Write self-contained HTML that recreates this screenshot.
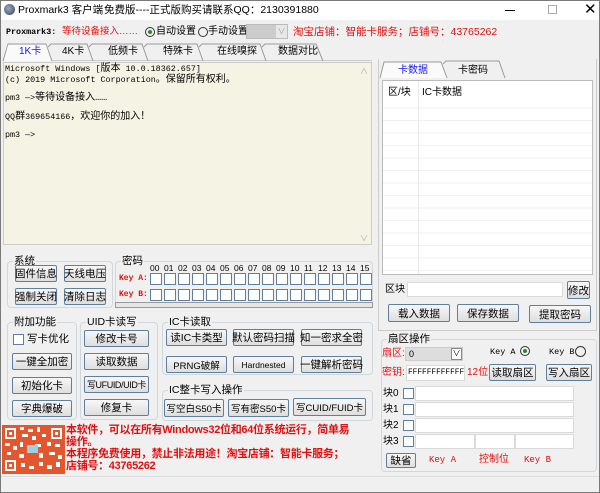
<!DOCTYPE html>
<html><head><meta charset="utf-8"><style>
*{margin:0;padding:0;box-sizing:border-box}
body{width:600px;height:493px;overflow:hidden;background:#f0f0f0;font-family:"Liberation Sans","Noto Sans CJK SC",sans-serif;font-size:10px;color:#000;position:relative}
.a{position:absolute;white-space:nowrap}
.b{position:absolute;border:1px solid #5f7f9f;border-radius:2px;background:linear-gradient(#f7f7f7,#dedede);display:flex;align-items:center;justify-content:center;font-size:10.5px;white-space:nowrap}
.g{position:absolute;border:1px solid #d0d8de;border-radius:4px}
.gt{position:absolute;top:-7px;left:5px;background:#f0f0f0;padding:0 1px;font-size:10.5px;line-height:12px}
.red{color:#e01010}
.m{font-family:"Liberation Mono","Noto Sans CJK SC",monospace}
.in{position:absolute;background:#fff;border:1px solid #dadada}
.cb{position:absolute;width:11px;height:11px;border:1px solid #5f7f9f;background:#fff}
.c{font-size:10px}
</style></head><body>
<div class="a" style="left:0;top:0;width:600px;height:493px;border:1px solid #7a7a7a"></div>
<div class="a" style="left:1px;top:1px;width:598px;height:19px;background:#fff"></div>
<div class="a" style="left:4px;top:4px;width:11px;height:11px;border-radius:50%;background:radial-gradient(circle at 40% 40%,#9ab,#345)"></div>
<div class="a" style="left:18px;top:3px;font-size:10.5px;line-height:14px">Proxmark3 客户端</div>
<div class="a" style="left:104px;top:3px;font-size:10.5px;line-height:14px">免费版----正式版购买请联系QQ：2130391880</div>
<div class="a" style="left:505px;top:10px;width:10px;height:1px;background:#000"></div>
<div class="a" style="left:548px;top:5px;width:9px;height:9px;border:1px solid #aaa"></div>
<div class="a" style="left:584px;top:1px;font-size:15px;line-height:18px">✕</div>
<div class="a m" style="left:6px;top:25px;font-size:8.4px;line-height:14px;font-weight:bold">Proxmark3:</div>
<div class="a red" style="left:62px;top:25px;font-size:9.5px;line-height:14px">等待设备接入……</div>
<div class="a" style="left:145px;top:27px;width:10px;height:10px;border:1px solid #333;border-radius:50%"></div>
<div class="a" style="left:148px;top:30px;width:4px;height:4px;border-radius:50%;background:#2a8a2a"></div>
<div class="a" style="left:156px;top:25px;line-height:14px">自动设置</div>
<div class="a" style="left:198px;top:27px;width:10px;height:10px;border:1px solid #333;border-radius:50%"></div>
<div class="a" style="left:208px;top:25px;line-height:14px">手动设置</div>
<div class="a" style="left:246px;top:24px;width:42px;height:15px;background:#ccc;border:1px solid #bbb"></div>
<div class="a" style="left:276px;top:25px;width:11px;height:13px;background:#e8e8e8;font-size:8px;color:#999;text-align:center;line-height:13px">∨</div>
<div class="a red" style="left:293px;top:24px;font-size:10.5px;line-height:16px">淘宝店铺：智能卡服务；店铺号：43765262</div>
<div class="a" style="left:3px;top:60px;width:369px;height:1px;background:#ccc"></div>
<svg class="a" style="left:0;top:42px" width="380" height="20"><g fill="none" stroke="#9a9a9a">
<path d="M3 19 L8 2 H46 L52 19"/><path d="M48 5 L51 2 H87 L93 19"/><path d="M89 5 L92 2 H142 L148 19"/><path d="M144 5 L147 2 H197 L203 19"/><path d="M199 5 L202 2 H260 L266 19"/><path d="M262 5 L265 2 H316 L323 19"/></g>
<path d="M4 19 L8 3 H46 L51 19Z" fill="#fafafa"/></svg>
<div class="a c" style="left:19px;top:45px;line-height:13px;color:#1a1aee">1K卡</div>
<div class="a c" style="left:62px;top:45px;line-height:13px">4K卡</div>
<div class="a c" style="left:108px;top:45px;line-height:13px">低频卡</div>
<div class="a c" style="left:163px;top:45px;line-height:13px">特殊卡</div>
<div class="a c" style="left:217px;top:45px;line-height:13px">在线嗅探</div>
<div class="a c" style="left:278px;top:45px;line-height:13px">数据对比</div>
<div class="a" style="left:3px;top:62px;width:369px;height:183px;background:#f5f3e4;border:1px solid #ccc"></div>
<div class="a" style="left:360px;top:66px;font-size:8px;color:#aaa">∧</div>
<div class="a" style="left:360px;top:233px;font-size:8px;color:#aaa">∨</div>
<div class="a m" style="left:5px;top:64px;font-size:8.4px;line-height:10px">Microsoft Windows [<span style="font-size:10px">版本</span> 10.0.18362.657]<br>(c) 2019 Microsoft Corporation<span style="font-size:10px">。保留所有权利。</span></div>
<div class="a m" style="left:5px;top:92px;font-size:8.4px;line-height:12px">pm3 —><span style="font-size:10px">等待设备接入……</span></div>
<div class="a m" style="left:5px;top:111px;font-size:8.4px;line-height:12px">QQ<span style="font-size:10px">群</span>369654166<span style="font-size:10px">，欢迎你的加入！</span></div>
<div class="a m" style="left:5px;top:129px;font-size:8.4px;line-height:12px">pm3 —></div>
<div class="a" style="left:378px;top:59px;width:219px;height:272px;border:1px solid #ccc;border-top:none"></div>
<svg class="a" style="left:378px;top:59px" width="222" height="20"><g fill="none" stroke="#9a9a9a"><path d="M2 19 L6 3 H63 L69 19" fill="#fafafa"/><path d="M65 5 L68 2 H121 L127 19"/></g></svg>
<div class="a c" style="left:398px;top:64px;line-height:13px;color:#1a1aee">卡数据</div>
<div class="a c" style="left:458px;top:64px;line-height:13px">卡密码</div>
<div class="a" style="left:382px;top:80px;width:211px;height:195px;background:#fff;border:1px solid #bbb;background-image:repeating-linear-gradient(#fff 0,#fff 11.5px,#eef0f2 11.5px,#eef0f2 12.5px);background-position:0 15px"></div>
<div class="a" style="left:383px;top:81px;width:209px;height:21px;background:#fff"></div>
<div class="a" style="left:418px;top:81px;width:1px;height:193px;background:#e6e8ea"></div>
<div class="a" style="left:388px;top:86px;line-height:14px">区/块</div>
<div class="a" style="left:422px;top:86px;line-height:14px">IC卡数据</div>
<div class="a" style="left:385px;top:283px;line-height:14px">区块</div>
<div class="in" style="left:407px;top:282px;width:156px;height:15px"></div>
<div class="b" style="left:567px;top:281px;width:23px;height:18px">修改</div>
<div class="b" style="left:388px;top:304px;width:62px;height:18px">载入数据</div>
<div class="b" style="left:457px;top:304px;width:62px;height:18px">保存数据</div>
<div class="b" style="left:529px;top:305px;width:62px;height:18px">提取密码</div>
<div class="g" style="left:381px;top:339px;width:216px;height:133px"><div class="gt">扇区操作</div></div>
<div class="a red" style="left:382px;top:347px;line-height:14px">扇区:</div>
<div class="a" style="left:405px;top:347px;width:58px;height:14px;background:#ddd;border:1px solid #ccc;font-size:9px;line-height:12px;padding-left:3px">0</div>
<div class="a" style="left:451px;top:348px;width:11px;height:12px;background:#fff;border:1px solid #888;font-size:8px;line-height:10px;text-align:center">∨</div>
<div class="a m" style="left:490px;top:345px;font-size:8.5px;line-height:14px">Key A</div>
<div class="a" style="left:520px;top:346px;width:10px;height:10px;border:1px solid #333;border-radius:50%"></div>
<div class="a" style="left:523px;top:349px;width:4px;height:4px;border-radius:50%;background:#2a8a2a"></div>
<div class="a m" style="left:549px;top:345px;font-size:8.5px;line-height:14px">Key B</div>
<div class="a" style="left:575px;top:346px;width:11px;height:11px;border:1px solid #333;border-radius:50%"></div>
<div class="a red" style="left:382px;top:366px;line-height:14px">密钥:</div>
<div class="in m" style="left:406px;top:365px;width:59px;height:16px;font-size:7.8px;line-height:14px;padding-left:1px">FFFFFFFFFFFF</div>
<div class="a red" style="left:467px;top:366px;line-height:14px">12位</div>
<div class="b" style="left:489px;top:364px;width:47px;height:17px">读取扇区</div>
<div class="b" style="left:546px;top:364px;width:46px;height:17px">写入扇区</div>
<div class="a" style="left:383px;top:387px;line-height:14px">块0</div>
<div class="a" style="left:383px;top:403px;line-height:14px">块1</div>
<div class="a" style="left:383px;top:419px;line-height:14px">块2</div>
<div class="a" style="left:383px;top:435px;line-height:14px">块3</div>
<div class="cb" style="left:403px;top:388px"></div><div class="cb" style="left:403px;top:404px"></div><div class="cb" style="left:403px;top:420px"></div><div class="cb" style="left:403px;top:436px"></div>
<div class="in" style="left:415px;top:386px;width:159px;height:15px"></div>
<div class="in" style="left:415px;top:402px;width:159px;height:15px"></div>
<div class="in" style="left:415px;top:418px;width:159px;height:15px"></div>
<div class="in" style="left:415px;top:434px;width:60px;height:15px"></div>
<div class="in" style="left:475px;top:434px;width:40px;height:15px"></div>
<div class="in" style="left:515px;top:434px;width:59px;height:15px"></div>
<div class="b" style="left:386px;top:453px;width:30px;height:15px">缺省</div>
<div class="a red m" style="left:429px;top:453px;font-size:9px;line-height:14px">Key A</div>
<div class="a red" style="left:479px;top:453px;line-height:14px">控制位</div>
<div class="a red m" style="left:524px;top:453px;font-size:9px;line-height:14px">Key B</div>
<div class="a" style="left:1px;top:476px;width:598px;height:1px;background:#ddd"></div>
<div class="g" style="left:7px;top:261px;width:106px;height:47px"><div class="gt">系统</div></div>
<div class="b" style="left:15px;top:265px;width:42px;height:17px">固件信息</div>
<div class="b" style="left:64px;top:265px;width:42px;height:17px">天线电压</div>
<div class="b" style="left:15px;top:288px;width:42px;height:17px">强制关闭</div>
<div class="b" style="left:64px;top:288px;width:42px;height:17px">清除日志</div>
<div class="g" style="left:115px;top:261px;width:258px;height:48px;border-bottom:none"><div class="gt">密码</div></div>
<div class="a" style="left:115px;top:302px;width:258px;height:6px;border:1px solid #999;background:#e6e6e6"></div>
<div class="a" style="left:150px;top:263px;font-size:8.5px;line-height:11px">
<span style="position:absolute;left:0">00</span><span style="position:absolute;left:14px">01</span><span style="position:absolute;left:28px">02</span><span style="position:absolute;left:42px">03</span><span style="position:absolute;left:56px">04</span><span style="position:absolute;left:70px">05</span><span style="position:absolute;left:84px">06</span><span style="position:absolute;left:98px">07</span><span style="position:absolute;left:112px">08</span><span style="position:absolute;left:126px">09</span><span style="position:absolute;left:140px">10</span><span style="position:absolute;left:154px">11</span><span style="position:absolute;left:168px">12</span><span style="position:absolute;left:182px">13</span><span style="position:absolute;left:196px">14</span><span style="position:absolute;left:210px">15</span></div>
<div class="a red m" style="left:119px;top:273px;font-size:8px;line-height:12px;font-weight:bold">Key A:</div>
<div class="a red m" style="left:119px;top:289px;font-size:8px;line-height:12px;font-weight:bold">Key B:</div>
<svg class="a" style="left:149px;top:272px" width="226" height="32"><g fill="#fff" stroke="#5f7f9f">
<rect x="1.5" y="1.5" width="11" height="11"/><rect x="15.5" y="1.5" width="11" height="11"/><rect x="29.5" y="1.5" width="11" height="11"/><rect x="43.5" y="1.5" width="11" height="11"/><rect x="57.5" y="1.5" width="11" height="11"/><rect x="71.5" y="1.5" width="11" height="11"/><rect x="85.5" y="1.5" width="11" height="11"/><rect x="99.5" y="1.5" width="11" height="11"/><rect x="113.5" y="1.5" width="11" height="11"/><rect x="127.5" y="1.5" width="11" height="11"/><rect x="141.5" y="1.5" width="11" height="11"/><rect x="155.5" y="1.5" width="11" height="11"/><rect x="169.5" y="1.5" width="11" height="11"/><rect x="183.5" y="1.5" width="11" height="11"/><rect x="197.5" y="1.5" width="11" height="11"/><rect x="211.5" y="1.5" width="11" height="11"/>
<rect x="1.5" y="17.5" width="11" height="11"/><rect x="15.5" y="17.5" width="11" height="11"/><rect x="29.5" y="17.5" width="11" height="11"/><rect x="43.5" y="17.5" width="11" height="11"/><rect x="57.5" y="17.5" width="11" height="11"/><rect x="71.5" y="17.5" width="11" height="11"/><rect x="85.5" y="17.5" width="11" height="11"/><rect x="99.5" y="17.5" width="11" height="11"/><rect x="113.5" y="17.5" width="11" height="11"/><rect x="127.5" y="17.5" width="11" height="11"/><rect x="141.5" y="17.5" width="11" height="11"/><rect x="155.5" y="17.5" width="11" height="11"/><rect x="169.5" y="17.5" width="11" height="11"/><rect x="183.5" y="17.5" width="11" height="11"/><rect x="197.5" y="17.5" width="11" height="11"/><rect x="211.5" y="17.5" width="11" height="11"/></g></svg>
<div class="g" style="left:7px;top:322px;width:70px;height:98px"><div class="gt">附加功能</div></div>
<div class="cb" style="left:13px;top:334px"></div>
<div class="a" style="left:27px;top:332px;font-size:10.5px;line-height:14px">写卡优化</div>
<div class="b" style="left:12px;top:353px;width:60px;height:17px">一键全加密</div>
<div class="b" style="left:12px;top:377px;width:60px;height:17px">初始化卡</div>
<div class="b" style="left:12px;top:400px;width:60px;height:17px">字典爆破</div>
<div class="g" style="left:80px;top:322px;width:78px;height:98px"><div class="gt">UID卡读写</div></div>
<div class="b" style="left:84px;top:330px;width:65px;height:17px">修改卡号</div>
<div class="b" style="left:84px;top:353px;width:65px;height:17px">读取数据</div>
<div class="b" style="left:84px;top:376px;width:65px;height:17px;font-size:9px;letter-spacing:-0.4px">写UFUID/UID卡</div>
<div class="b" style="left:84px;top:399px;width:65px;height:17px">修复卡</div>
<div class="g" style="left:162px;top:322px;width:211px;height:53px"><div class="gt">IC卡读取</div></div>
<div class="b" style="left:166px;top:329px;width:61px;height:17px">读IC卡类型</div>
<div class="b" style="left:233px;top:329px;width:61px;height:17px">默认密码扫描</div>
<div class="b" style="left:301px;top:329px;width:61px;height:17px">知一密求全密</div>
<div class="b" style="left:166px;top:356px;width:61px;height:17px;font-size:9.5px">PRNG破解</div>
<div class="b" style="left:233px;top:356px;width:61px;height:17px;font-size:8.5px">Hardnested</div>
<div class="b" style="left:301px;top:356px;width:61px;height:17px">一键解析密码</div>
<div class="g" style="left:162px;top:390px;width:211px;height:31px"><div class="gt">IC整卡写入操作</div></div>
<div class="b" style="left:164px;top:399px;width:60px;height:18px;font-size:9.5px">写空白S50卡</div>
<div class="b" style="left:228px;top:399px;width:61px;height:18px;font-size:9.5px">写有密S50卡</div>
<div class="b" style="left:293px;top:398px;width:73px;height:18px;font-size:9.5px">写CUID/FUID卡</div>
<svg class="a" style="left:2px;top:425px" width="63" height="49"><rect width="63" height="49" fill="#e4572e"/>
<g fill="#fff"><rect x="3" y="3" width="11" height="11"/><rect x="49" y="3" width="11" height="11"/><rect x="3" y="35" width="11" height="11"/>
<rect x="18" y="2" width="4" height="3"/><rect x="26" y="4" width="5" height="3"/><rect x="35" y="2" width="3" height="5"/><rect x="20" y="9" width="6" height="3"/><rect x="30" y="11" width="4" height="4"/><rect x="40" y="9" width="4" height="3"/>
<rect x="3" y="18" width="5" height="3"/><rect x="11" y="21" width="4" height="4"/><rect x="18" y="17" width="3" height="5"/><rect x="33" y="19" width="6" height="3"/><rect x="45" y="17" width="4" height="4"/><rect x="53" y="19" width="5" height="3"/>
<rect x="5" y="27" width="4" height="3"/><rect x="17" y="29" width="5" height="4"/><rect x="37" y="28" width="4" height="5"/><rect x="47" y="27" width="6" height="3"/><rect x="56" y="30" width="4" height="4"/>
<rect x="19" y="38" width="4" height="4"/><rect x="27" y="41" width="5" height="3"/><rect x="37" y="37" width="4" height="4"/><rect x="45" y="40" width="5" height="4"/><rect x="54" y="37" width="4" height="5"/></g>
<g fill="#e4572e"><rect x="5" y="5" width="7" height="7"/><rect x="51" y="5" width="7" height="7"/><rect x="5" y="37" width="7" height="7"/></g>
<g fill="#fff"><rect x="7" y="7" width="3" height="3"/><rect x="53" y="7" width="3" height="3"/><rect x="7" y="39" width="3" height="3"/></g>
<rect x="25" y="20" width="11" height="8" fill="#9cd0e6"/></svg>
<div class="a red" style="left:66px;top:424px;font-size:11px;line-height:12px;font-weight:bold;letter-spacing:-0.3px">本软件，可以在所有Windows32位和64位系统运行，简单易<br>操作。<br>本程序免费使用，禁止非法用途！淘宝店铺：智能卡服务；<br>店铺号：43765262</div>
</body></html>
